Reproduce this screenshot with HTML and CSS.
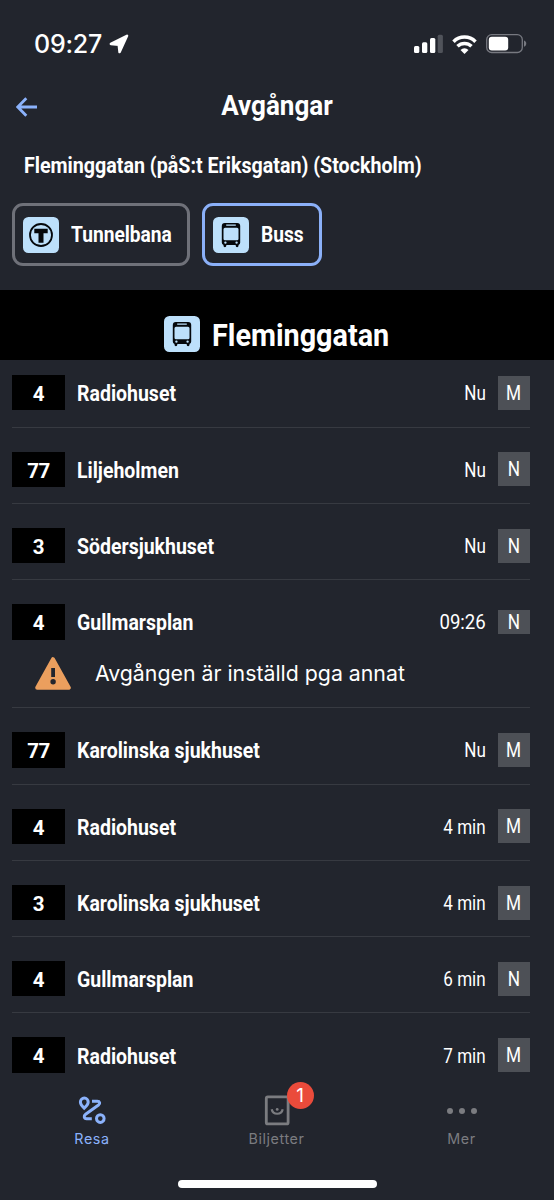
FILE: index.html
```html
<!DOCTYPE html>
<html lang="sv">
<head>
<meta charset="utf-8">
<title>Avgångar</title>
<link rel="stylesheet" href="styles.css">
</head>
<body>
<svg class="defs" aria-hidden="true">
  <symbol id="bus" viewBox="0 0 36 36">
    <rect width="36" height="36" rx="5.5" fill="#bde0fb"/>
    <path fill="#05080c" fill-rule="evenodd" d="M11.8 6h12.4a3 3 0 0 1 3 3v16.5a2.6 2.6 0 0 1-1.7 2.5v.8a1.4 1.4 0 0 1-2.8 0V28h-9.400v.8a1.400 1.400 0 0 1-2.800 0V28a2.600 2.600 0 0 1-1.700-2.500V9a3 3 0 0 1 3-3zM13.200 7.600v1.200h9.600V7.600zM12 10.700a1.500 1.500 0 0 0-1.500 1.500v9.500a1.500 1.500 0 0 0 1.500 1.500h12a1.500 1.500 0 0 0 1.500-1.500v-9.500A1.500 1.500 0 0 0 24 10.700zM12.400 24.400a1.200 1.200 0 1 0 0 2.400 1.200 1.200 0 0 0 0-2.400zM23.600 24.400a1.200 1.200 0 1 0 0 2.400 1.200 1.200 0 0 0 0-2.400z"/>
  </symbol>
</svg>
<div class="phone">
  <div class="status">
    <span class="clock">09:27</span>
    <svg class="loc" viewBox="0 0 20 20"><path d="M18 1.800 10.600 18 9.800 10.800 1.900 9.900z" fill="#fff" stroke="#fff" stroke-width="2.600" stroke-linejoin="round"/></svg>
    <span class="spacer"></span>
    <svg class="signal" viewBox="0 0 29 20"><rect x="0" y="12" width="5.300" height="7" rx="1.500" fill="#fff"/><rect x="8" y="8.300" width="5.300" height="10.700" rx="1.500" fill="#fff"/><rect x="16" y="4" width="5.300" height="15" rx="1.500" fill="#fff"/><rect x="23.700" y="0.700" width="5.200" height="18.300" rx="1.500" fill="#50535a"/></svg>
    <svg class="wifi" viewBox="0 0 25 19"><g fill="none" stroke="#fff" stroke-width="3.500"><path d="M1.500 6.700a15.500 15.500 0 0 1 22 0"/><path d="M5.500 11.300a10 10 0 0 1 14 0"/></g><path d="M12.500 18.900 8.500 14.900a5.800 5.800 0 0 1 8 0z" fill="#fff"/></svg>
    <svg class="battery" viewBox="0 0 41 20"><rect x=".7" y=".7" width="35.600" height="17.800" rx="5" fill="none" stroke="#777980" stroke-width="1.300"/><rect x="2.800" y="2.800" width="19.400" height="13.600" rx="3" fill="#fff"/><path d="M38 6.500c3 .8 3 5.400 0 6.200z" fill="#777980"/></svg>
  </div>

  <header class="nav">
    <svg class="back" viewBox="0 0 22 20"><path d="M21 10H2M10.300 1.300 1.800 10l8.500 8.700" fill="none" stroke="#8bb2fb" stroke-width="2.800"/></svg>
    <h1 class="title">Avgångar</h1>
  </header>

  <p class="place">Fleminggatan (påS:t Eriksgatan) (Stockholm)</p>

  <div class="chips">
    <div class="chip chip-metro">
      <svg class="mode" viewBox="0 0 36 36"><rect width="36" height="36" rx="5.500" fill="#bde0fb"/><circle cx="18" cy="18" r="11" fill="none" stroke="#05080c" stroke-width="1.800"/><path d="M11.300 11.700h13.400v4.600h-4.200v9.500h-5v-9.500h-4.200z" fill="#05080c"/></svg>
      <span class="chip-text">Tunnelbana</span>
    </div>
    <div class="chip chip-bus active">
      <svg class="mode"><use href="#bus"/></svg>
      <span class="chip-text">Buss</span>
    </div>
  </div>

  <div class="stop">
    <svg class="mode"><use href="#bus"/></svg>
    <h2 class="stop-name">Fleminggatan</h2>
  </div>

  <main class="list">
    <div class="row"><div class="line"><span class="num">4</span><span class="dest">Radiohuset</span><span class="time">Nu</span><span class="pos"><span class="letter">M</span></span></div></div>
    <div class="row"><div class="line"><span class="num">77</span><span class="dest">Liljeholmen</span><span class="time">Nu</span><span class="pos"><span class="letter">N</span></span></div></div>
    <div class="row"><div class="line"><span class="num">3</span><span class="dest">Södersjukhuset</span><span class="time">Nu</span><span class="pos"><span class="letter">N</span></span></div></div>
    <div class="row has-alert"><div class="line"><span class="num">4</span><span class="dest">Gullmarsplan</span><span class="time clock-time">09:26</span><span class="pos short"><span class="letter">N</span></span></div>
      <div class="alert"><svg class="warn" viewBox="0 0 36 33"><path d="M18 2.200 33.800 30.800H2.200z" fill="#eb9f5e" stroke="#eb9f5e" stroke-width="4" stroke-linejoin="round"/><path d="M16.200 11h3.800v9h-3.800z" fill="#22252d"/><circle cx="18.100" cy="24.700" r="2.700" fill="#22252d"/></svg><span class="alert-text">Avgången är inställd pga annat</span></div></div>
    <div class="row"><div class="line"><span class="num">77</span><span class="dest">Karolinska sjukhuset</span><span class="time">Nu</span><span class="pos"><span class="letter">M</span></span></div></div>
    <div class="row"><div class="line"><span class="num">4</span><span class="dest">Radiohuset</span><span class="time">4 min</span><span class="pos"><span class="letter">M</span></span></div></div>
    <div class="row"><div class="line"><span class="num">3</span><span class="dest">Karolinska sjukhuset</span><span class="time">4 min</span><span class="pos"><span class="letter">M</span></span></div></div>
    <div class="row"><div class="line"><span class="num">4</span><span class="dest">Gullmarsplan</span><span class="time">6 min</span><span class="pos"><span class="letter">N</span></span></div></div>
    <div class="row"><div class="line"><span class="num">4</span><span class="dest">Radiohuset</span><span class="time">7 min</span><span class="pos"><span class="letter">M</span></span></div></div>
  </main>

  <nav class="tabs">
    <div class="tab selected">
      <svg class="tab-icon" viewBox="0 0 32 32"><g fill="none" stroke="#8bb2fb" stroke-width="3"><path d="M8.200 14.200C5.500 11.600 4.400 9.800 4.400 8a3.900 3.900 0 0 1 7.800 0c0 1.800-1.200 3.600-4 6.200z"/><path d="M16 7.300h5.300c2.600 0 3.200 2.200 1.200 3.700L9.600 20.200c-2.200 1.600-1.700 4.500 1 4.500H15.800"/><circle cx="24.300" cy="24.600" r="3.800"/></g></svg>
      <span class="tab-label">Resa</span>
    </div>
    <div class="tab">
      <div class="ticket"><svg class="tab-icon" viewBox="0 0 32 32"><rect x="5.300" y="2.900" width="21.800" height="27" rx="1.500" fill="none" stroke="#7b7c80" stroke-width="2.800"/><path d="M10.700 15.200a5.600 5.600 0 0 0 11 0" fill="none" stroke="#7b7c80" stroke-width="2.200"/><circle cx="16.200" cy="15.400" r="1.400" fill="#7b7c80"/></svg><span class="badge">1</span></div>
      <span class="tab-label">Biljetter</span>
    </div>
    <div class="tab">
      <svg class="tab-icon" viewBox="0 0 32 32"><g fill="#7b7c80"><circle cx="4" cy="17" r="3"/><circle cx="16" cy="17" r="3"/><circle cx="28" cy="17" r="3"/></g></svg>
      <span class="tab-label">Mer</span>
    </div>
  </nav>
  <div class="home"></div>
</div>
</body>
</html>
```
FILE: styles.css
```css
* { box-sizing: border-box; }
body { margin: 0; background: #22252d; color: #fff; font-family: Roboto, "Noto Sans", sans-serif; }
.defs { position: absolute; width: 0; height: 0; }
svg { display: block; flex: none; }
.phone { width: 554px; height: 1200px; overflow: hidden; display: flex; flex-direction: column; white-space: nowrap; }

.status { height: 86px; flex: none; display: flex; align-items: center; padding: 2px 27px 0 34px; }
.clock { font: 500 25px/30px Inter, sans-serif; letter-spacing: -.2px; width: 69px; }
.loc { width: 20px; height: 20px; margin-left: 6px; }
.spacer { flex: 1; }
.signal { width: 29px; height: 20px; }
.wifi { width: 25px; height: 19px; margin-left: 9px; }
.battery { width: 41px; height: 20px; margin-left: 9px; }

.nav { height: 42px; flex: none; display: flex; align-items: center; padding-left: 16px; }
.back { width: 22px; height: 20px; }
.title { margin: -2px 38px 0 0; flex: 1; text-align: center; font-size: 28px; line-height: 36px; font-weight: 700; transform: scaleX(.93); }

.place { margin: 20px 0 0 24px; height: 35px; line-height: 35px; font-size: 21.500px; font-weight: 700; transform: scaleX(.914); transform-origin: left; }
.chips { margin: 20px 0 0 12px; display: flex; gap: 12px; height: 63px; flex: none; }
.chip { border: 3px solid #6f7179; border-radius: 11px; display: flex; align-items: center; gap: 12px; padding-left: 8px; }
.chip-metro { width: 178px; }
.chip-bus { width: 120px; }
.active { border-color: #8bb0f8; }
.mode { width: 36px; height: 36px; }
.chip-text { padding-top: 1px; font-size: 21.300px; line-height: 28px; font-weight: 700; transform: scaleX(.9); transform-origin: left; }

.stop { margin-top: 24px; height: 70px; flex: none; background: #000; display: flex; align-items: center; gap: 12px; padding: 18px 0 0 164px; }
.stop-name { margin: 0; font-size: 31.500px; line-height: 42px; padding-top: 4px; font-weight: 700; transform: scaleX(.914); transform-origin: left; }

.list { height: 716px; flex: none; overflow: hidden; padding-left: 12px; padding-right: 24px; }
.row { height: 76.300px; padding-top: 24px; border-bottom: 1px solid #373a41; }
.row:first-child { height: 67.700px; padding-top: 15px; }
.row:last-child { border-bottom: 0; }
.has-alert { height: 128px; }
.line { display: flex; align-items: center; height: 35.300px; }
.num { width: 53px; height: 100%; background: #000; text-align: center; font-size: 20.500px; line-height: 38px; font-weight: 700; letter-spacing: -.4px; }
.dest { margin-left: 12px; padding-top: 3px; font-size: 21.300px; line-height: 28px; font-weight: 700; transform: scaleX(.915); transform-origin: left; }
.time { margin-left: auto; margin-right: 12px; padding-top: 3px; font-size: 19.600px; line-height: 28px; transform: scaleX(.87); transform-origin: right; }
.clock-time { transform: scaleX(.95); }
.pos { width: 32px; height: 34px; line-height: 36px; background: #4d5056; text-align: center; font-size: 19.600px; }
.short { height: 24px; line-height: 26px; }
.letter { display: inline-block; transform: scaleX(.88); }
.alert { display: flex; align-items: center; padding: 17px 0 0 23px; gap: 24px; }
.warn { width: 36px; height: 33px; }
.alert-text { font: 400 21.300px/30px Inter, sans-serif; }

.tabs { height: 104px; flex: none; display: grid; grid-template-columns: 184px 185px 185px; padding-top: 18px; }
.tab { display: flex; flex-direction: column; align-items: center; color: #7b7c80; }
.selected { color: #8bb2fb; }
.tab-icon { width: 32px; height: 32px; }
.ticket { position: relative; }
.badge { position: absolute; left: 26px; top: -12px; width: 27px; height: 27px; border-radius: 50%; background: #ea4b3b; color: #fff; font: 400 19px/27px Inter, sans-serif; text-align: center; }
.tab-label { font: 400 14.300px/18px Inter, sans-serif; margin-top: 4px; letter-spacing: .6px; }
.home { width: 199px; height: 8px; flex: none; border-radius: 4px; background: #fff; margin-left: 178px; }
```
